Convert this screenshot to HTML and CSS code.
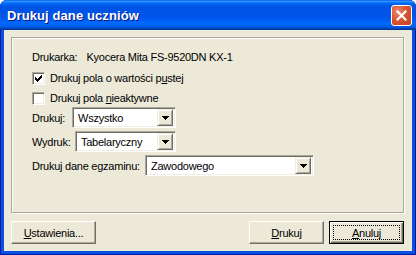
FILE: index.html
```html
<!DOCTYPE html>
<html>
<head>
  <meta charset="utf-8">
  <title>Drukuj dane uczniów</title>
  <link rel="stylesheet" href="styles.css">
</head>
<body>
  <div class="window">
    <div class="titlebar">
      <span class="title">Drukuj dane uczniów</span>
      <span class="close">
        <svg width="11" height="11" viewBox="0 0 11 11">
          <path d="M1.5 1.5 L9.5 9.5 M9.5 1.5 L1.5 9.5" stroke="#fff" stroke-width="2.2" stroke-linecap="square"/>
        </svg>
      </span>
    </div>
    <div class="client">
      <div class="group">
        <div class="printer">
          <span class="printer-label">Drukarka:</span>
          <span>Kyocera Mita FS-9520DN KX-1</span>
        </div>
        <div class="check first">
          <span class="box">
            <svg width="7" height="7" viewBox="0 0 7 7" shape-rendering="crispEdges">
              <path d="M6 0h1v3h-1zM5 1h1v3h-1zM4 2h1v3h-1zM3 3h1v3h-1zM2 4h1v3h-1zM1 3h1v3h-1zM0 2h1v3h-1z" fill="#000"/>
            </svg>
          </span>
          <span>Drukuj pola o wartości p<u>u</u>stej</span>
        </div>
        <div class="check">
          <span class="box"></span>
          <span>Drukuj pola <u>n</u>ieaktywne</span>
        </div>
        <div class="field first">
          <span class="label label-print">Drukuj:</span>
          <div class="combo combo-print">
            <span class="value">Wszystko</span>
            <span class="arrow"><svg width="7" height="4" viewBox="0 0 7 4" shape-rendering="crispEdges"><path d="M0 0h7v1h-7zM1 1h5v1h-5zM2 2h3v1h-3zM3 3h1v1h-1z" fill="#000"/></svg></span>
          </div>
        </div>
        <div class="field">
          <span class="label label-type">Wydruk:</span>
          <div class="combo combo-type">
            <span class="value">Tabelaryczny</span>
            <span class="arrow"><svg width="7" height="4" viewBox="0 0 7 4" shape-rendering="crispEdges"><path d="M0 0h7v1h-7zM1 1h5v1h-5zM2 2h3v1h-3zM3 3h1v1h-1z" fill="#000"/></svg></span>
          </div>
        </div>
        <div class="field">
          <span class="label label-exam">Drukuj dane egzaminu:</span>
          <div class="combo combo-exam">
            <span class="value">Zawodowego</span>
            <span class="arrow"><svg width="7" height="4" viewBox="0 0 7 4" shape-rendering="crispEdges"><path d="M0 0h7v1h-7zM1 1h5v1h-5zM2 2h3v1h-3zM3 3h1v1h-1z" fill="#000"/></svg></span>
          </div>
        </div>
      </div>
      <div class="buttons">
        <span class="btn btn-settings"><u>U</u>stawienia...</span>
        <span class="spacer"></span>
        <span class="btn"><u>D</u>rukuj</span>
        <span class="btn default"><u>A</u>nuluj</span>
      </div>
    </div>
  </div>
</body>
</html>
```

FILE: styles.css
```css
/* base */
* {
  margin: 0; padding: 0;
  box-sizing: border-box; }
html, body {
  width: 416px; height: 255px;
  overflow: hidden;
  background: #fff; }
body {
  font-family: "Liberation Sans", Arial, sans-serif;
  font-size: 11px;
  letter-spacing: -0.25px;
  color: #000; }
u { text-underline-offset: 1px; }

/* window frame */
.window {
  width: 416px; height: 255px;
  display: flex;
  flex-direction: column;
  border-radius: 7px 7px 0 0;
  overflow: hidden;
  background: #0A4FDF;
  box-shadow: inset 1px 0 #0019A8, inset -1px 0 #0019A8, inset 0 -1px #0019A8; }
.titlebar {
  flex: none;
  height: 30px;
  display: flex;
  align-items: center;
  justify-content: space-between;
  padding: 0 4px 0 7px;
  background: linear-gradient(to bottom,
    #0058EE 0%, #3593FF 4%, #288EFF 6%, #127DFF 8%, #036FFC 10%,
    #0262EE 14%, #0057E5 20%, #0054E3 24%, #0055EB 56%, #005BF5 66%,
    #026AFE 76%, #0062EF 86%, #0052D6 92%, #0040AB 96%, #003092 100%); }
.title {
  color: #fff;
  font-weight: bold;
  font-size: 13px;
  letter-spacing: 0.1px;
  text-shadow: 1px 1px #0A1883; }
.close {
  width: 21px; height: 21px;
  display: flex;
  align-items: center;
  justify-content: center;
  border: 1px solid #fff;
  border-radius: 3px;
  background: radial-gradient(circle at 30% 30%, #E9896B 0%, #DA5432 45%, #C2411E 100%); }

/* client area */
.client {
  flex: 1;
  margin: 0 4px 4px;
  padding: 7px 8px 0 7px;
  display: flex;
  flex-direction: column;
  background: #ECE9D8; }
.group {
  height: 176px;
  border: 1px solid #ACA899;
  box-shadow: inset 1px 1px #fff, 1px 1px #fff;
  padding: 13px 0 0 20px;
  display: flex;
  flex-direction: column; }
.printer {
  height: 13px;
  line-height: 13px;
  display: flex;
  white-space: nowrap; }
.printer-label { margin-right: 9px; }

/* checkboxes */
.check {
  height: 13px;
  line-height: 13px;
  margin-top: 7px;
  display: flex;
  align-items: center;
  white-space: nowrap; }
.check.first { margin-top: 8px; }
.box {
  flex: none;
  width: 13px; height: 13px;
  margin-right: 5px;
  display: flex;
  align-items: center;
  justify-content: center;
  border: 1px solid;
  border-color: #ACA899 #fff #fff #ACA899;
  box-shadow: inset 1px 1px #716F64, inset -1px -1px #F1EFE2;
  background: #fff; }

/* combos */
.field {
  height: 21px;
  margin-top: 3px;
  display: flex;
  align-items: center; }
.field.first { margin-top: 2px; }
.label {
  flex: none;
  white-space: nowrap; }
.label-print { width: 40px; }
.label-type { width: 43px; }
.label-exam { width: 113px; }
.combo {
  flex: none;
  height: 21px;
  padding: 2px;
  display: flex;
  align-items: center;
  border: 1px solid;
  border-color: #ACA899 #fff #fff #ACA899;
  box-shadow: inset 1px 1px #716F64, inset -1px -1px #F1EFE2;
  background: #fff; }
.combo-print { width: 104px; }
.combo-type { width: 101px; }
.combo-exam { width: 169px; }
.value {
  flex: 1;
  padding-left: 3px;
  white-space: nowrap; }
.arrow {
  width: 16px; height: 17px;
  display: flex;
  align-items: center;
  justify-content: center;
  border: 1px solid;
  border-color: #F1EFE2 #716F64 #716F64 #F1EFE2;
  box-shadow: inset 1px 1px #fff, inset -1px -1px #ACA899;
  background: #ECE9D8; }

/* buttons */
.buttons {
  margin-top: 8px;
  display: flex;
  gap: 5px; }
.spacer { flex: 1; }
.btn {
  position: relative;
  width: 75px; height: 23px;
  display: flex;
  align-items: center;
  justify-content: center;
  border: 1px solid;
  border-color: #fff #716F64 #716F64 #fff;
  box-shadow: inset -1px -1px #ACA899;
  background: #ECE9D8; }
.btn-settings { width: 85px; }
.btn.default {
  border-color: #000;
  box-shadow: inset 1px 1px #fff, inset -1px -1px #716F64, inset -2px -2px #ACA899; }
.btn.default::after {
  content: "";
  position: absolute;
  inset: 3px;
  border: 1px dotted #000; }
```
